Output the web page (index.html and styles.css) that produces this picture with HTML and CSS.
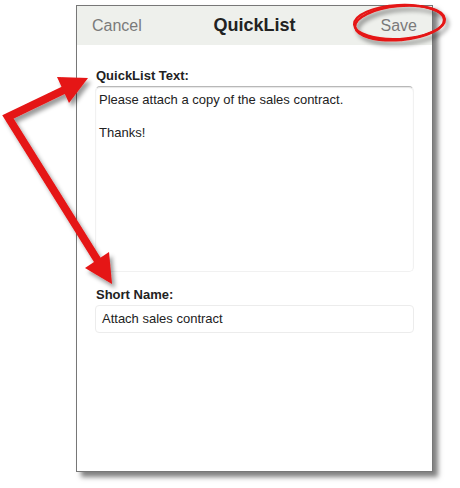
FILE: index.html
```html
<!DOCTYPE html>
<html lang="en">
<head>
  <meta charset="UTF-8">
  <title>QuickList</title>
  <link rel="stylesheet" href="styles.css">
</head>
<body>
  <div class="panel">
    <div class="barre">
      <span class="btn">Cancel</span>
      <span class="titre">QuickList</span>
      <span class="btn btn-droite">Save</span>
    </div>
    <div class="contenu">
      <div class="label">QuickList Text:</div>
      <div class="zone-texte">
        <p>Please attach a copy of the sales contract.</p>
        <p>Thanks!</p>
      </div>
      <div class="label label-court">Short Name:</div>
      <div class="champ">Attach sales contract</div>
    </div>
  </div>

  <!-- annotations rouges par-dessus la capture -->
  <svg class="annotations" width="460" height="488" viewBox="0 0 460 488">
    <defs>
      <filter id="ombre" x="-20%" y="-20%" width="140%" height="140%">
        <feDropShadow dx="3" dy="4" stdDeviation="2" flood-color="#000" flood-opacity="0.4"/>
      </filter>
    </defs>
    <g filter="url(#ombre)" fill="#e51414" stroke="#e51414">
      <polyline points="64,90 8,117 98,261" fill="none" stroke-width="8" stroke-linejoin="miter"/>
      <polygon points="88,78 69,103 57,77" stroke="none"/>
      <polygon points="112,284 109,252 85,268" stroke="none"/>
      <ellipse cx="399" cy="22" rx="45" ry="17" fill="none" stroke-width="2.2" transform="rotate(-3 399 22)"/>
      <ellipse cx="400" cy="23" rx="45" ry="17" fill="none" stroke-width="2.4" transform="rotate(-5 400 23)"/>
    </g>
  </svg>
</body>
</html>
```

FILE: styles.css
```css
body {
  margin: 0;
  width: 460px;
  height: 488px;
  background: #fff;
  font-family: "Liberation Sans", Arial, sans-serif;
  position: relative;
  overflow: hidden;
}

.panel {
  margin: 5px 0 0 76px;
  width: 355px;
  height: 465px;
  border: 1px solid #777;
  background: #fff;
  box-shadow: 5px 5px 5px rgba(0, 0, 0, 0.5);
}

.barre {
  height: 39px;
  background: #eef0ec;
  display: grid;
  grid-template-columns: 1fr auto 1fr;
  align-items: center;
  padding: 0 15px;
}

.btn {
  font-size: 16px;
  color: #7a7a7a;
}

.btn-droite {
  justify-self: end;
}

.titre {
  font-size: 18px;
  font-weight: bold;
  color: #222;
}

.contenu {
  padding: 23px 18px 0 18px;
}

.label {
  font-size: 13px;
  font-weight: bold;
  line-height: 16px;
  color: #222;
  padding-left: 1px;
  margin-bottom: 2px;
}

.label-court {
  margin-top: 15px;
}

.zone-texte {
  height: 176px;
  border: 1px solid #f1f1f1;
  border-top-color: #b8b8b8;
  border-radius: 5px;
  box-shadow: inset 0 1px 1px rgba(0, 0, 0, 0.1);
  padding: 5px 3px 3px 3px;
  font-size: 13px;
  line-height: 16.5px;
  color: #222;
}

.zone-texte p {
  margin: 0 0 16.5px 0;
}

.champ {
  height: 26px;
  border: 1px solid #ececec;
  border-radius: 4px;
  padding: 0 6px;
  font-size: 13px;
  line-height: 26px;
  color: #222;
}

.annotations {
  position: absolute;
  top: 0;
  left: 0;
  pointer-events: none;
}
```
